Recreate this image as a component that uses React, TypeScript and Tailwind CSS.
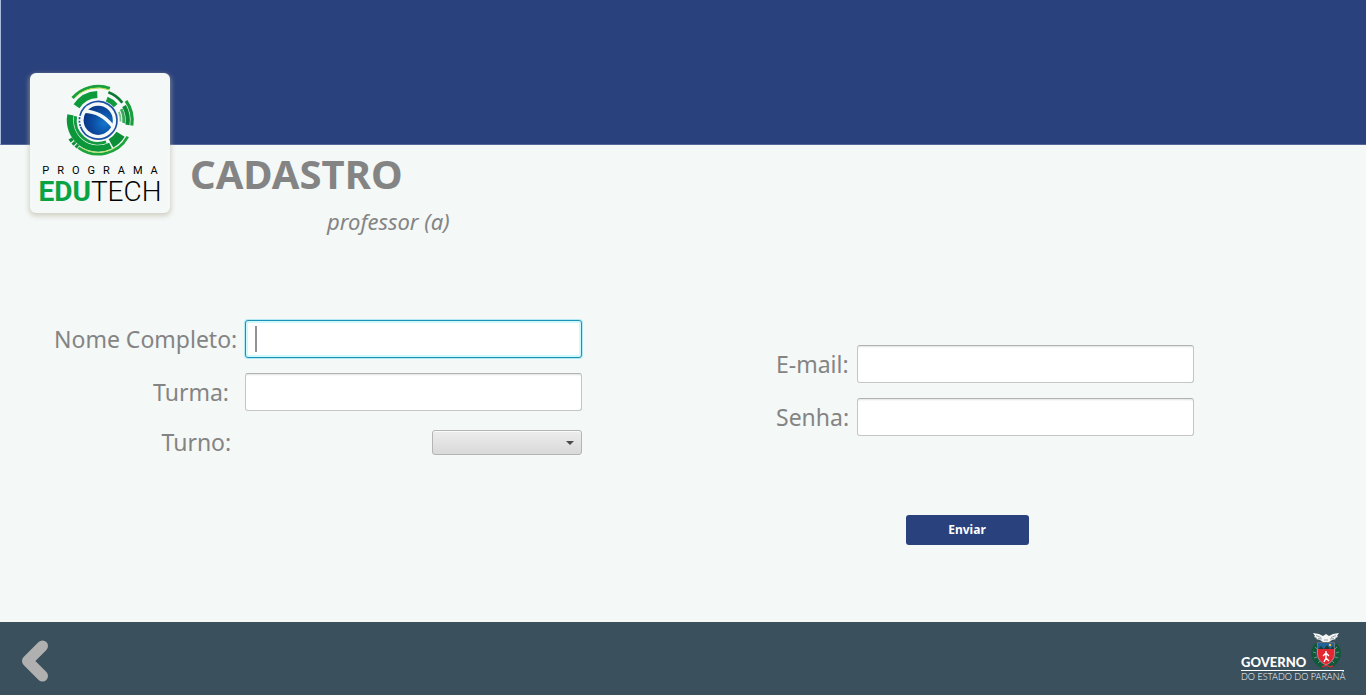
import type { ReactNode } from "react";

const arc = (r: number, from: number, to: number) => {
  const point = (deg: number) => {
    const a = (deg * Math.PI) / 180;
    return `${(38.2 + r * Math.cos(a)).toFixed(2)} ${(39.3 + r * Math.sin(a)).toFixed(2)}`;
  };
  return `M${point(from)} A${r} ${r} 0 ${to - from > 180 ? 1 : 0} 1 ${point(to)}`;
};

// radius, start angle, end angle, stroke width, colour
const arcs: [number, number, number, number, string][] = [
  [34, 221, 290, 3, "#18a03c"],
  [32.4, 226, 290, 1, "#b5dc4a"],
  [25.8, 213, 268, 7, "#0c9a3a"],
  [29.8, 290, 324, 2.8, "#0c7a34"],
  [22.8, 292, 320, 5, "#149a3e"],
  [34, 325, 369, 3.2, "#15a03c"],
  [29.6, 331, 369, 4.2, "#0d8a36"],
  [25.6, 334, 366, 2.8, "#3aa85a"],
  [22.4, 338, 363, 1.8, "#78c48c"],
  [28.2, 64, 191, 6.4, "#0b9639"],
  [23, 70, 190, 3, "#119a40"],
  [26.4, 32, 61, 9.6, "#0d8f38"],
  [33.8, 29, 126, 2.8, "#1ba53c"],
  [32.2, 58, 122, 0.8, "#b9de4c"],
  [33.4, 127, 132, 4, "#118f3a"],
  [33.4, 134, 139, 4, "#118f3a"],
  [33.4, 141, 147, 4, "#118f3a"],
];

function EdutechMark() {
  return (
    <svg viewBox="0 0 80 80" className="h-20 w-20" aria-hidden="true">
      <defs>
        <radialGradient id="ball" cx="0.72" cy="0.6" r="0.75">
          <stop offset="0" stopColor="#1277cf" />
          <stop offset="0.55" stopColor="#0c4da2" />
          <stop offset="1" stopColor="#0b3384" />
        </radialGradient>
      </defs>
      {arcs.map(([r, a, b, w, c], i) => (
        <path key={i} d={arc(r, a, b)} fill="none" stroke={c} strokeWidth={w} />
      ))}
      <circle cx="38.2" cy="39.3" r="19.6" fill="#f4f8f7" />
      <path d={arc(18.8, 194, 520)} fill="none" stroke="#1c4fa5" strokeWidth="1.7" />
      <path d={arc(18.8, 162, 190)} fill="none" stroke="#1c4fa5" strokeWidth="1.7" strokeDasharray="2 1.5" />
      <circle cx="38.2" cy="39.3" r="14.6" fill="url(#ball)" />
      <path d="M23 32 Q40 31.4 51.8 47 L53.4 43.4 Q42 29 25 28.4Z" fill="#f4f8f7" />
    </svg>
  );
}

function ParanaCrest() {
  return (
    <svg viewBox="0 0 32 38" className="h-[38px] w-8" aria-hidden="true">
      <path d="M7 13 Q2 18 4 25 Q7 32 14 35" fill="none" stroke="#0b5a34" strokeWidth="4.6" strokeDasharray="2.2 .4" />
      <path d="M25 13 Q30 18 28 25 Q25 32 18 35" fill="none" stroke="#0b5a34" strokeWidth="4.6" strokeDasharray="2.2 .4" />
      <path d="M5 15l2 2M3 20l3 1M4 26l3-1M8 31l2-2M27 15l-2 2M29 20l-3 1M28 26l-3-1M24 31l-2-2" stroke="#78b59a" strokeWidth=".7" />
      <path d="M12 35l4-2 4 2 3-1" fill="none" stroke="#c7303c" strokeWidth="1.4" />
      <path d="M7.5 11h17v11q0 7-8.5 11q-8.5-4-8.5-11z" fill="#e3262f" stroke="#f2c8c6" strokeWidth=".5" />
      <path d="M7.5 11h17v6h-17z" fill="#20639b" />
      <path d="M8 17l3-3 3 3 3-4 3 4 3-3 1 3z" fill="#173e35" />
      <circle cx="20" cy="13" r="1.2" fill="#efc749" />
      <path d="M16 19v2m0 0l-3 3m3-3l3 3m-3-3v5l-2 4m2-4l3 3" fill="none" stroke="#fff" strokeWidth="1.4" />
      <path d="M3 1l6 1 4 2 3-2 3 2 4-2 6-1-2 3 1 1-3 1 1 1-4 1-3 2h-6l-3-2-4-1 1-1-3-1 1-1z" fill="#f4f6f6" />
      <path d="M6 3.5l5 2M8 6.5l4 .5M26 3.500l-5 2M24 6.500l-4 .5M14 8h4" stroke="#5d6970" strokeWidth=".6" />
    </svg>
  );
}

const boxClass =
  "h-[38px] w-full rounded-[3px] border border-[#c4c6c6] border-t-[#b0b2b2] bg-white px-[10px] text-[23px] text-[#848484] shadow-[inset_0_2px_2px_-1px_#e2e4e4] outline-none";
const activeClass =
  "h-[38px] w-full rounded-[3px] border border-[#1d90b4] bg-white px-[10px] text-[23px] text-[#848484] caret-transparent shadow-[inset_0_0_0_2px_#cdf9ff,0_0_0_1px_#b5e9f5] outline-none";

function Label({ id, children }: { id: string; children: ReactNode }) {
  return (
    <label htmlFor={id} className="text-right text-[23px] leading-8 whitespace-pre">
      {children}
    </label>
  );
}

export default function App() {
  return (
    <div className="flex min-h-screen flex-col bg-[#f4f8f7] font-['Noto_Sans','Open_Sans',sans-serif] text-[#848484]">
      <header className="h-[145px] border-b border-l border-b-[#53679a] border-l-[#a9bbdc] bg-[#29417d]" />

      <main className="flex-1">
        <div className="-mt-[72px] flex gap-5 px-[30px]">
          <div className="flex h-[140px] w-[140px] flex-col items-center rounded-md bg-[#f4f8f7] pt-2 font-['Roboto',sans-serif] text-black shadow-[0_2px_5px_1px_#b9b6a499]">
            <EdutechMark />
            <p className="pl-2 text-[11px] leading-5 tracking-[8px]">PROGRAMA</p>
            <p className="text-[28px] leading-[22px] font-light">
              <span className="font-bold text-[#0aa344]">EDU</span>TECH
            </p>
          </div>
          <div className="pt-[72px]">
            <h1 className="text-[40px] leading-[58px] font-bold">CADASTRO</h1>
            <p className="pl-[137px] text-[22px] leading-9 italic">professor (a)</p>
          </div>
        </div>

        <form
          className="grid grid-cols-[528fr_418fr] items-start gap-[194px] pt-[81px] pr-[172px] pb-8 pl-[54px]"
          onSubmit={(e) => e.preventDefault()}
        >
          <div className="grid grid-cols-[181px_1fr] items-center gap-x-[10px] gap-y-[15px]">
            <Label id="nome">Nome Completo:</Label>
            <div className="relative">
              <input id="nome" type="text" className={activeClass} />
              <span className="absolute top-[6px] left-[10px] h-[26px] w-[2px] bg-[#909295]" />
            </div>
            <Label id="turma">{"Turma:\u00a0"}</Label>
            <input id="turma" type="text" className={boxClass} />
            <Label id="turno">{"Turno:\u2009"}</Label>
            <div className="relative w-[150px] justify-self-end">
              <select
                id="turno"
                className="block h-[25px] w-full appearance-none rounded-[3px] border border-[#b3b4b4] bg-linear-to-b from-[#ededed] to-[#d9d9d9] px-2 text-xs shadow-[inset_0_1px_0_#fafafa] outline-none"
              >
                <option value="" />
                <option>Manhã</option>
                <option>Tarde</option>
                <option>Noite</option>
              </select>
              <svg viewBox="0 0 8 4" className="pointer-events-none absolute top-[11px] right-2 h-1 w-2" aria-hidden="true">
                <path d="M0 0h8l-4 4z" fill="#4a4a4a" />
              </svg>
            </div>
          </div>

          <div className="grid grid-cols-[71px_1fr] items-center gap-x-[10px] gap-y-[15px] pt-[25px]">
            <Label id="email">E-mail:</Label>
            <input id="email" type="email" className={boxClass} />
            <Label id="senha">Senha:</Label>
            <input id="senha" type="password" className={boxClass} />
            <div className="col-span-2 flex justify-center pt-16 pr-9">
              <button type="submit" className="h-[30px] w-[123px] rounded-[3px] bg-[#29417d] text-xs font-bold text-white">
                Enviar
              </button>
            </div>
          </div>
        </form>
      </main>

      <footer className="flex h-[73px] items-center justify-between bg-[#3a505c] pr-[22px] pl-[21px]">
        <button type="button" aria-label="Voltar">
          <svg viewBox="0 0 28 42" className="mt-1 h-[42px] w-7" aria-hidden="true">
            <path d="M21.500 6L6.500 21l15 15" fill="none" stroke="#b0b0b0" strokeWidth="11" strokeLinecap="round" strokeLinejoin="round" />
          </svg>
        </button>
        <div className="w-[103px] pb-1 font-['Lato',sans-serif] text-white">
          <div className="flex items-end justify-between border-b border-white pr-[2px]">
            <span className="text-[13px] leading-4 font-black">GOVERNO</span>
            <ParanaCrest />
          </div>
          <p className="text-[9px] leading-[11px] font-light whitespace-nowrap">DO ESTADO DO PARANÁ</p>
        </div>
      </footer>
    </div>
  );
}
